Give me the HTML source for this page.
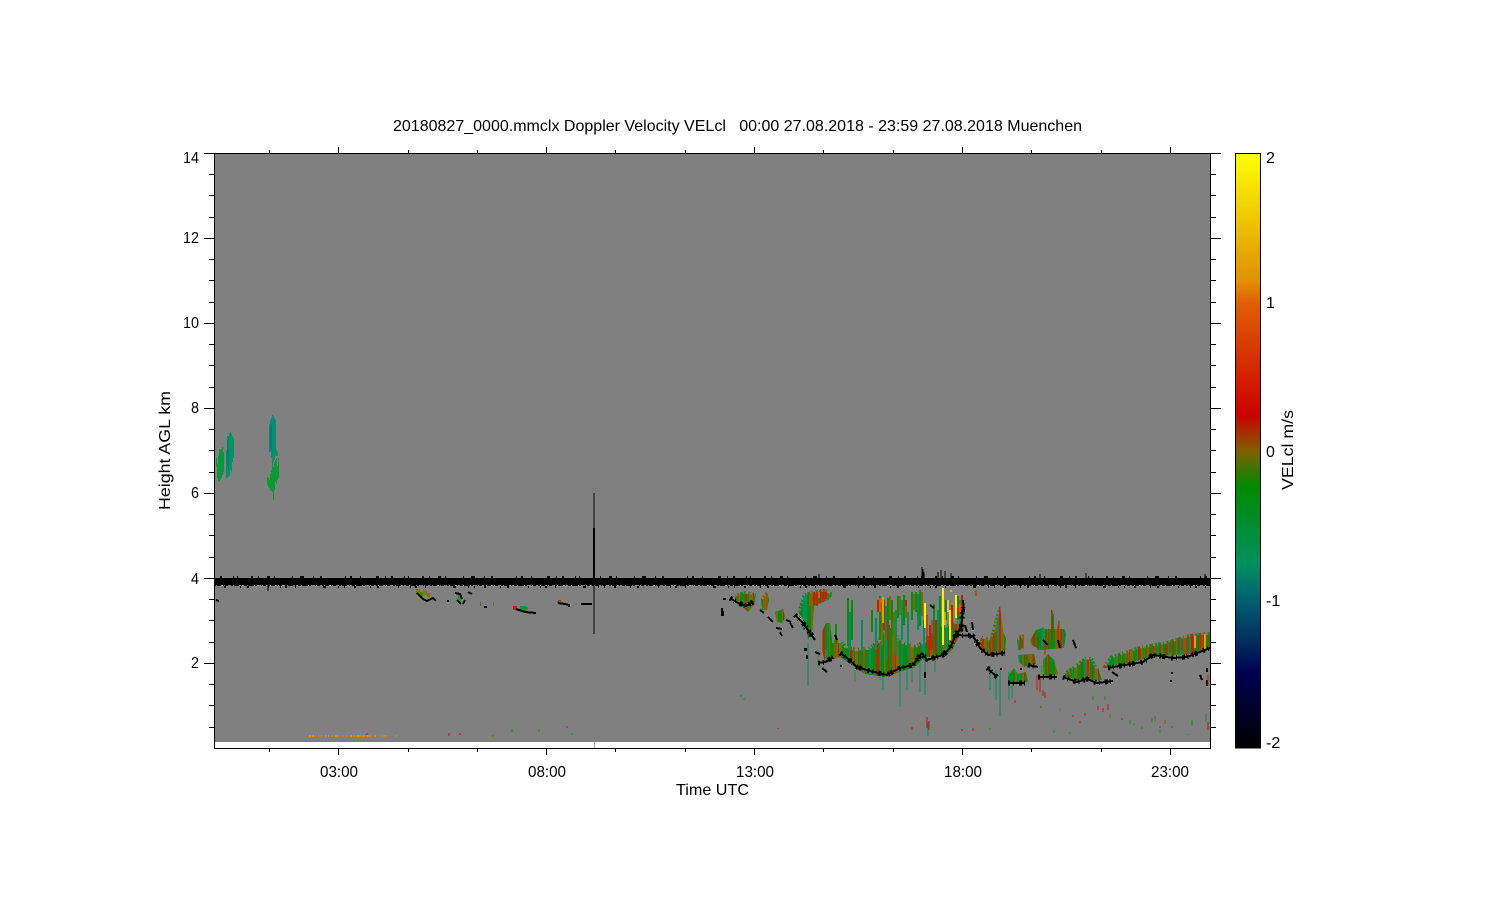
<!DOCTYPE html>
<html><head><meta charset="utf-8"><title>20180827_0000.mmclx Doppler Velocity</title>
<style>html,body{margin:0;padding:0;background:#fff}svg{display:block}text{font-family:"Liberation Sans",sans-serif;fill:#000}</style></head>
<body>
<svg width="1500" height="900" viewBox="0 0 1500 900" xmlns="http://www.w3.org/2000/svg">
<defs>
<linearGradient id="cb" x1="0" y1="1" x2="0" y2="0">
<stop offset="0" stop-color="#000"/>
<stop offset=".126" stop-color="#000050"/>
<stop offset=".182" stop-color="#003060"/>
<stop offset=".25" stop-color="#006070"/>
<stop offset=".31" stop-color="#009060"/>
<stop offset=".44" stop-color="#008a00"/>
<stop offset=".50" stop-color="#806000"/>
<stop offset=".56" stop-color="#cc0000"/>
<stop offset=".75" stop-color="#e06000"/>
<stop offset=".785" stop-color="#e09000"/>
<stop offset="1" stop-color="#ffff00"/>
</linearGradient>
<clipPath id="clouds">
<polygon points="735,594 745,591 756,593 755,604 748,612 742,606 735,600"/>
<polygon points="761,598 767,591 769,600 767,610 762,610"/>
<polygon points="775,612 783,609 785,618 782,623 777,622"/>
<polygon points="798,610 803,594 815,590 826,589 834,594 828,600 814,606 812,632 808,640 805,620 800,615"/>
<polygon points="822,632 826,623 830,623 832,640 842,640 846,645 856,648 868,647 878,640 884,625 895,625 900,640 915,645 924,640 932,630 945,625 958,620 962,630 952,650 945,656 925,657 915,667 900,672 885,677 865,674 855,667 840,657 825,662 822,650"/>
<polygon points="978,645 982,636 990,638 997,612 1000,606 1003,632 1006,638 1005,652 990,655 980,650"/>
<polygon points="1017,638 1024,634 1024,648 1018,650"/>
<polygon points="1030,640 1036,630 1046,627 1050,607 1056,620 1062,622 1066,634 1064,648 1040,650 1032,645"/>
<polygon points="1018,655 1034,654 1036,664 1024,667 1019,662"/>
<polygon points="1043,660 1048,654 1054,660 1058,674 1044,677"/>
<polygon points="1008,676 1014,668 1018,674 1026,672 1028,682 1008,683"/>
<polygon points="1064,672 1075,665 1085,657 1092,657 1098,668 1102,680 1080,680 1066,677"/>
<polygon points="1102,668 1110,656 1140,646 1167,641 1190,634 1210,632 1210,648 1190,654 1173,655 1147,658 1110,668"/>
</clipPath>
<clipPath id="plot"><rect x="214" y="153" width="996" height="595"/></clipPath>
</defs>
<rect width="1500" height="900" fill="#fff"/>
<rect x="214" y="153" width="996" height="589" fill="#808080"/>

<g clip-path="url(#clouds)" fill="none" stroke-width="110" shape-rendering="crispEdges">
<line x1="730" y1="640" x2="1210" y2="640" stroke="#0a8a12"/>
<line x1="730" y1="640" x2="1210" y2="640" stroke="#7a6a00" stroke-dasharray="3 5 2 9 4 3 1 6 5 8 2 4 3 11 2 5"/>
<line x1="730" y1="640" x2="1210" y2="640" stroke="#009060" stroke-dasharray="2 13 1 7 3 17 2 9 1 11 3 6 2 19"/>
<line x1="733" y1="640" x2="1210" y2="640" stroke="#c82000" stroke-dasharray="1 11 2 6 1 17 3 9 1 5 2 23 1 8 2 13"/>
<line x1="737" y1="640" x2="1210" y2="640" stroke="#a05000" stroke-dasharray="2 17 1 9 2 27 3 14 1 21"/>
</g>
<!-- jagged edges / gaps -->
<g fill="none" stroke="#808080" clip-path="url(#plot)" shape-rendering="crispEdges">
<line x1="1030" y1="618" x2="1066" y2="618" stroke-width="22" stroke-dasharray="5 3 2 4 7 3 4 2"/>
<path stroke-width="5" stroke-dasharray="1 3 2 1 3 2 1 4 2 2" d="M1102 668L1110 656L1140 646L1167 641L1190 634L1210 632"/>
<path stroke-width="5" stroke-dasharray="2 2 1 3 1 2 3 2" d="M735 594L745 591L756 593M761 598L767 591M798 610L803 594L815 590L826 589L834 594M1064 672L1075 665L1085 657L1092 657L1098 668M1017 638L1024 634M978 645L982 636L990 638L997 612"/>
<path stroke-width="6" stroke-dasharray="2 1 1 2 3 1" d="M832 640L842 640L846 645L856 648L868 647L878 640L884 625L895 625L900 640L915 645L924 640L932 630L945 625L958 620"/>
</g>
<g fill="none" stroke-width="2" shape-rendering="crispEdges">
<path stroke="#0a8a12" d="M848 598V646M852 600V640M872 610V632M880 596V640M888 598V628M892 600V636M898 596V618M904 595V625M912 592V620M916 592V612M920 590V626M934 604V640M940 596V635M946 600V620M958 596V620M836 624V644M826 624V650"/>
<path stroke="#009060" d="M850 612V650M862 620V650M876 618V650M886 606V660M896 610V656M902 600V640M908 612V660M918 594V630M924 620V660M938 610V650M960 600V630M804 596V630"/>
<path stroke="#7a6a00" d="M882 602V645M890 596V620M894 612V650M900 596V615M906 600V618M914 594V610M922 592V616M944 630V650M950 620V650M810 594V606"/>
<path stroke="#c82000" d="M884 600V630M888 622V640M878 600V612M906 600V606M930 625V650M936 620V655M952 605V630M962 595V625M958 608V615M956 635V640M814 592V605M817 592V606M820 590V603M823 592V602M826 592V599"/>
<path stroke="#d06000" d="M880 598V612M950 600V620M960 604V612M819 592V598"/>
</g>
<g stroke-width="1" fill="none" shape-rendering="crispEdges">
<path stroke="#c81800" d="M927 615V648M932 620V650M976 590V596M990 640V655M996 632V652M1020 635V650M1022 640V648M1038 637V650M1045 640V655M1052 610V640M1058 625V640M1082 662V680M1088 660V678M1093 665V680M1140 650V660M1160 645V655M1178 638V652M1188 634V655M1198 635V650M1204 632V647M1150 648V656M1170 642V652M1182 638V650M1192 636V650M1201 634V648"/>
<path stroke="#e0a000" stroke-width="2" d="M883 597V623M1205 634V650M1195 636V648"/>
<path stroke="#ffee00" stroke-width="2" d="M943 588V645M950 610V640M925 603V628M956 595V618"/>
<path stroke="#ffee00" d="M945 612V625M951 590V592"/>
<path stroke="#fff" d="M948 600V612"/>
<!-- tails -->
<path stroke="#009060" d="M808 643V686M900 667V707M880 670V680M883 672V690M907 670V690M912 668V682M920 660V692M925 660V695M935 655V672M990 665V690M1000 670V716M996 670V700M1009 672V700M1012 680V698"/>
<path stroke="#b02000" d="M1040 678V692M1043 690V696M1045 692V698"/>
<path stroke="#2a9a20" d="M1042 665V680M855 670V682M818 650V668"/>
</g>

<!-- early cirrus -->
<g fill="none" stroke-width="1" shape-rendering="crispEdges">
<path stroke="#08983a" d="M216.5 458V467M217.5 464V478M218.5 456V481M219.5 449V482M220.5 450V480M221.5 449V478M222.5 447V475M223.5 452V472"/>
<path stroke="#059462" d="M226.5 450V478M227.5 436V478M228.5 436V477M229.5 433V476M230.5 432V470M231.5 434V472M232.5 436V462M233.5 438V458"/>
<path stroke="#067c72" d="M227.5 440V466M228.5 438V470"/>
<path stroke="#06906c" d="M269.5 424V452M270.5 420V452M271.5 418V458M272.5 415V470M273.5 416V462M274.5 418V460M275.5 420V456M276.5 450V456M277.5 452V456"/>
<path stroke="#067a72" d="M270.5 426V448M271.5 424V450"/>
<path stroke="#0a9a32" d="M267.5 477V485M268.5 478V487M269.5 480V488M270.5 474V490M271.5 470V491M272.5 470V492M273.5 467V500M274.5 462V490M275.5 460V482M276.5 458V484M277.5 466V480M278.5 458V478"/>
</g>

<!-- low patches -->
<g shape-rendering="crispEdges">
<rect x="416" y="589" width="4" height="6" fill="#8a6a10"/><rect x="423" y="590" width="4" height="5" fill="#a06a10"/><rect x="420" y="592" width="3" height="5" fill="#0a9a30"/><rect x="427" y="593" width="3" height="4" fill="#8a7000"/>
<rect x="458" y="594" width="3" height="8" fill="#10a030"/>
<rect x="480" y="602" width="1" height="4" fill="#088a30"/>
<rect x="513" y="606" width="4" height="4" fill="#c02010"/><rect x="520" y="606" width="6" height="5" fill="#109040"/><rect x="526" y="607" width="2" height="3" fill="#7a7000"/>
<rect x="557" y="601" width="1" height="3" fill="#089040"/><rect x="493" y="602" width="1" height="4" fill="#7a7000"/>
<rect x="558" y="600" width="3" height="2" fill="#a04010"/>
</g>

<!-- black: radar noise band -->
<g shape-rendering="crispEdges" fill="none" stroke="#000">
<rect x="214" y="578" width="996" height="7" fill="#000" stroke="none"/>
<line x1="214" y1="577" x2="1210" y2="577" stroke-width="2" stroke-dasharray="1 5 2 11 1 3 1 13 2 5 1 8 3 4 1 17 1 7 4 9 1 6 2 23 1 4 2 8 1 15 3 6"/>
<line x1="214" y1="585.5" x2="1210" y2="585.5" stroke-width="1" stroke-dasharray="2 1 4 2 1 1 3 3 2 1 5 2 1 2 3 1 6 1 2 4 1 1 3 2"/>
<line x1="214" y1="587" x2="1210" y2="587" stroke-width="2" stroke-dasharray="1 9 2 14 1 6 2 19 1 11 1 4 2 8 1 27 3 12 1 5"/>
<path stroke-width="1" d="M268 585V591M922 567V578M923 569V578M924 572V578M938 572V578M941 570V578M945 571V578M951 573V578M819 574V578M1040 574V578M1086 573V578M1205 574V578"/>
<path stroke-width="1" d="M594 493V634"/>
<rect x="593" y="528" width="2" height="50" fill="#000" stroke="none"/>
<rect x="594" y="742" width="1" height="6" fill="#a0a0a0" stroke="none"/>
</g>

<!-- black: cloud base markers -->
<g fill="none" stroke="#000" stroke-linejoin="bevel" shape-rendering="crispEdges">
<g stroke-width="2">
<path id="b" d="M730 598L738 603L746 606L753 602M795 615L803 623L810 633L815 640M818 663L826 662L833 657M840 653L847 658L857 667L870 671L887 675L900 668L913 665L922 653L927 660L943 655L950 648L957 632L961 630L963 607M957 635L973 636L980 648L988 655L1005 653M987 668L997 677M1008 683L1025 683M1028 665L1038 667M1038 677L1057 677M1063 677L1077 682L1087 679L1097 683L1113 681M1108 668L1143 662L1153 655L1173 658L1187 657L1210 648"/>
</g>
<path stroke-width="5" stroke-dasharray="2 3 1 5 3 2 1 4 2 1 3 6" d="M730 598L738 603L746 606L753 602M795 615L803 623L810 633L815 640M818 663L826 662L833 657M840 653L847 658L857 667L870 671L887 675L900 668L913 665L922 653L927 660L943 655L950 648L957 632L961 630L963 607M957 635L973 636L980 648L988 655L1005 653M987 668L997 677M1008 683L1025 683M1028 665L1038 667M1038 677L1057 677M1063 677L1077 682L1087 679L1097 683L1113 681M1108 668L1143 662L1153 655L1173 658L1187 657L1210 648"/>
</g>
<g fill="none" stroke="#000" stroke-width="2" shape-rendering="crispEdges">
<path d="M417 593L423 599L427 601L433 598L436 601"/>
<path d="M455 593L460 594L462 599M457 600L461 604M465 600L463 604M468 592L472 594"/>
<path d="M484 607L487 607M448 600L448 602"/>
<path d="M516 609L525 612L536 613"/>
<path d="M558 603L565 604L569 605L569 607"/>
<path d="M581 604L592 604"/>
<path d="M216 600L219 601"/>
<path d="M722 608V616M790 623L793 628M786 620L791 622"/>
<path d="M760 610L764 613M768 617L773 622M776 628L782 629M780 632L782 636M815 652L820 654M822 668L827 672M835 635L837 640M930 605L934 608M963 600L964 612M965 625L967 632M972 622L973 630M1043 640L1048 645M1058 640L1060 648M1073 640L1076 648M1112 672L1118 676M1200 675L1202 680M1207 668V672M1207 680V686"/>
</g>
<g fill="#000" shape-rendering="crispEdges">
<rect x="723" y="598" width="3" height="2"/><rect x="722" y="611" width="2" height="5"/><rect x="804" y="648" width="3" height="3"/><rect x="806" y="655" width="2" height="4"/><rect x="840" y="665" width="2" height="2"/><rect x="924" y="672" width="2" height="6"/><rect x="1000" y="668" width="2" height="2"/><rect x="1020" y="668" width="2" height="2"/><rect x="1171" y="672" width="2" height="2"/><rect x="1170" y="680" width="2" height="2"/>
</g>

<!-- faint low returns -->
<line x1="309" y1="736" x2="402" y2="736" stroke="#e88a00" stroke-width="2" shape-rendering="crispEdges" stroke-dasharray="2 1 2 1 1 2 1 2 1 3 1 2 1 3 1 2 2 1 1 3 1 3 1 3 2 1 2 1 5 1 3 1 3 1 1 3 2 6 1 1 1 1 1 9 1 6"/>
<g fill="none" stroke-width="1" shape-rendering="crispEdges">
<path stroke="#d01000" d="M449 733V736M460 733V735M367 733V735M567 726V728M778 728V729M912 727V730M927 717V728M929 721V730M962 729V731M973 728V731M1015 700V703M1037 675V690M1041 706V708M1073 715V717M1080 721V723M1085 713V716M1098 706V710M1103 708V712M1108 704V710M1122 718V720M1160 726V728M1172 726V728M1192 724V726M1208 722V730M1208 675V685"/>
<path stroke="#149a14" d="M512 729V732M539 729V732M572 733V735M744 698V700M990 728V730M1054 730V733M1130 720V724M1134 723V726M1142 726V729M1152 718V722M1160 730V733M1070 732V734M1093 696V700M1105 696V700M1188 734V735M1192 720V726M1206 714V722"/>
<path stroke="#7a6a00" d="M493 735V737M1060 708V712M1110 714V718M1155 716V722M1165 720V724"/>
<path stroke="#009060" d="M928 722V736M741 695V697"/>
</g>

<!-- axes -->
<g fill="none" stroke="#000" stroke-width="1" shape-rendering="crispEdges">
<path d="M214.5 153.5H1210.5V748.5H214.5Z"/>
<path d="M204 153.5H214M204 238.5H214M204 323.5H214M204 408.5H214M204 493.5H214M204 578.5H214M204 663.5H214"/>
<path d="M209 174.5H214M209 195.5H214M209 217.5H214M209 259.5H214M209 280.5H214M209 302.5H214M209 344.5H214M209 365.5H214M209 387.5H214M209 429.5H214M209 450.5H214M209 472.5H214M209 514.5H214M209 535.5H214M209 557.5H214M209 599.5H214M209 620.5H214M209 642.5H214M209 684.5H214M209 705.5H214M209 727.5H214"/>
<path d="M1211 153.5H1221M1211 238.5H1221M1211 323.5H1221M1211 408.5H1221M1211 493.5H1221M1211 578.5H1221M1211 663.5H1221"/>
<path d="M1211 174.5H1216M1211 195.5H1216M1211 217.5H1216M1211 259.5H1216M1211 280.5H1216M1211 302.5H1216M1211 344.5H1216M1211 365.5H1216M1211 387.5H1216M1211 429.5H1216M1211 450.5H1216M1211 472.5H1216M1211 514.5H1216M1211 535.5H1216M1211 557.5H1216M1211 599.5H1216M1211 620.5H1216M1211 642.5H1216M1211 684.5H1216M1211 705.5H1216M1211 727.5H1216"/>
<path d="M338.5 147V153M546.5 147V153M754.5 147V153M962.5 147V153M1170.5 147V153"/>
<path d="M269.5 150V153M408.5 150V153M477.5 150V153M615.5 150V153M685.5 150V153M823.5 150V153M893.5 150V153M1031.5 150V153M1101.5 150V153"/>
<path d="M338.5 749V755M546.5 749V755M754.5 749V755M962.5 749V755M1170.5 749V755"/>
<path d="M269.5 749V752M408.5 749V752M477.5 749V752M615.5 749V752M685.5 749V752M823.5 749V752M893.5 749V752M1031.5 749V752M1101.5 749V752"/>
</g>

<!-- colour bar -->
<rect x="1235.5" y="153.5" width="25" height="594.5" fill="url(#cb)" stroke="#000" stroke-width="1" shape-rendering="crispEdges"/>

<!-- text -->
<g font-size="16">
<text x="393" y="131" textLength="689" lengthAdjust="spacingAndGlyphs" xml:space="preserve">20180827_0000.mmclx Doppler Velocity VELcl   00:00 27.08.2018 - 23:59 27.08.2018 Muenchen</text>
<g lengthAdjust="spacingAndGlyphs">
<text x="183" y="163" textLength="16" lengthAdjust="spacingAndGlyphs">14</text>
<text x="183" y="243" textLength="16" lengthAdjust="spacingAndGlyphs">12</text>
<text x="183" y="328" textLength="16" lengthAdjust="spacingAndGlyphs">10</text>
<text x="191" y="413" textLength="8" lengthAdjust="spacingAndGlyphs">8</text>
<text x="191" y="498" textLength="8" lengthAdjust="spacingAndGlyphs">6</text>
<text x="191" y="584" textLength="8" lengthAdjust="spacingAndGlyphs">4</text>
<text x="191" y="668" textLength="8" lengthAdjust="spacingAndGlyphs">2</text>
</g>
<text x="320" y="777" textLength="38" lengthAdjust="spacingAndGlyphs">03:00</text>
<text x="528" y="777" textLength="38" lengthAdjust="spacingAndGlyphs">08:00</text>
<text x="736" y="777" textLength="38" lengthAdjust="spacingAndGlyphs">13:00</text>
<text x="944" y="777" textLength="38" lengthAdjust="spacingAndGlyphs">18:00</text>
<text x="1151" y="777" textLength="38" lengthAdjust="spacingAndGlyphs">23:00</text>
<text x="676" y="795" textLength="73" lengthAdjust="spacingAndGlyphs">Time UTC</text>
<text transform="translate(170 510) rotate(-90)" textLength="119" lengthAdjust="spacingAndGlyphs">Height AGL km</text>
<text x="1266" y="163">2</text>
<text x="1266" y="308">1</text>
<text x="1266" y="457">0</text>
<text x="1266" y="606">-1</text>
<text x="1266" y="748">-2</text>
<text transform="translate(1293 490) rotate(-90)" textLength="80" lengthAdjust="spacingAndGlyphs">VELcl m/s</text>
</g>
</svg>
</body></html>
